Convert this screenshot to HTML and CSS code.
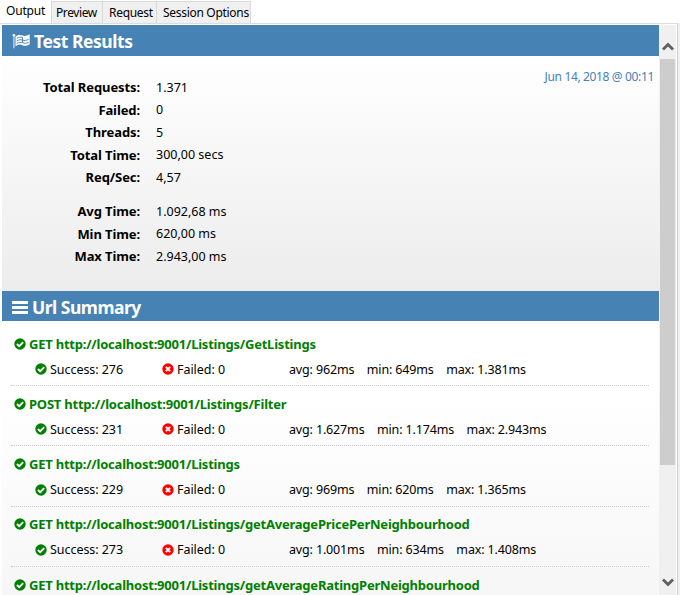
FILE: index.html
```html
<!DOCTYPE html>
<html lang="en">
<head>
<meta charset="utf-8">
<title>Test Results</title>
<link rel="stylesheet" href="styles.css">
</head>
<body>
<svg class="defs" aria-hidden="true">
  <symbol id="ok" viewBox="0 0 12 12"><circle cx="6" cy="6" r="5.7" fill="#008000"/><path d="M2.9 6 5.2 8.2 9.2 4.2" fill="none" stroke="#fff" stroke-width="1.8"/></symbol>
  <symbol id="bad" viewBox="0 0 12 12"><circle cx="6" cy="6" r="5.7" fill="#f00"/><path d="M3.9 3.9 8.1 8.1M8.1 3.9 3.9 8.1" fill="none" stroke="#fff" stroke-width="2"/></symbol>
</svg>
<div class="app">
  <nav class="tabs">
    <div class="tab active"><span class="t-output">Output</span></div>
    <div class="tab preview"><span>Preview</span></div>
    <div class="tab request"><span>Request</span></div>
    <div class="tab session"><span>Session Options</span></div>
  </nav>
  <div class="frame">
    <main class="content">
      <h2 class="bar">
        <svg class="flag" viewBox="0 0 20 16"><path d="M2 2.5V15.5" stroke="#fff" stroke-opacity=".75" stroke-width="1.3"/><circle cx="2" cy="1.9" r="1.4" fill="#fff"/><path d="M3.7 3.2C7 1.2 9 1.3 11.2 2.3 13.5 3.3 15.5 2.6 18.6 1V11.4C15.5 13.2 13.3 13.5 11 12.4 8.7 11.3 6.5 11.8 3.7 13.5Z" fill="#fff"/><path d="M5 5.2C7.3 4 9 3.6 11 4.3M5 10.6C7.3 9.4 9 9 11 9.7M11 4.3V7C13.3 7.9 15.2 7.4 17.5 6.2M11 9.7V7C9 6.3 7.3 6.7 5 7.9M11 9.7C13.3 10.8 15.2 10.5 17.5 9.3" fill="none" stroke="#4682b4" stroke-width="1"/></svg>
        <span class="h-test">Test Results</span>
      </h2>
      <section class="summary">
        <dl class="stats">
          <dt>Total Requests:</dt><dd>1.371</dd>
          <dt>Failed:</dt><dd>0</dd>
          <dt>Threads:</dt><dd>5</dd>
          <dt>Total Time:</dt><dd>300,00 secs</dd>
          <dt>Req/Sec:</dt><dd>4,57</dd>
        </dl>
        <dl class="stats times">
          <dt>Avg Time:</dt><dd>1.092,68 ms</dd>
          <dt>Min Time:</dt><dd>620,00 ms</dd>
          <dt>Max Time:</dt><dd>2.943,00 ms</dd>
        </dl>
        <time class="date">Jun 14, 2018 @ 00:11</time>
      </section>
      <h2 class="bar second">
        <svg class="menu" viewBox="0 0 16 14"><path d="M0 2.5H16M0 7.5H16M0 12.5H16" stroke="#fff" stroke-width="3"/></svg>
        <span class="h-url">Url Summary</span>
      </h2>
      <section class="urls">
        <article class="item">
          <h3><svg class="ic"><use href="#ok"/></svg><span>GET http://localhost:9001/Listings/GetListings</span></h3>
          <div class="row"><span class="success"><svg class="ic"><use href="#ok"/></svg>Success: 276</span><span class="failed"><svg class="ic"><use href="#bad"/></svg>Failed: 0</span><span class="m">avg: 962ms</span><span class="m">min: 649ms</span><span class="m">max: 1.381ms</span></div>
        </article>
        <article class="item">
          <h3><svg class="ic"><use href="#ok"/></svg><span>POST http://localhost:9001/Listings/Filter</span></h3>
          <div class="row"><span class="success"><svg class="ic"><use href="#ok"/></svg>Success: 231</span><span class="failed"><svg class="ic"><use href="#bad"/></svg>Failed: 0</span><span class="m">avg: 1.627ms</span><span class="m">min: 1.174ms</span><span class="m">max: 2.943ms</span></div>
        </article>
        <article class="item">
          <h3><svg class="ic"><use href="#ok"/></svg><span>GET http://localhost:9001/Listings</span></h3>
          <div class="row"><span class="success"><svg class="ic"><use href="#ok"/></svg>Success: 229</span><span class="failed"><svg class="ic"><use href="#bad"/></svg>Failed: 0</span><span class="m">avg: 969ms</span><span class="m">min: 620ms</span><span class="m">max: 1.365ms</span></div>
        </article>
        <article class="item">
          <h3><svg class="ic"><use href="#ok"/></svg><span>GET http://localhost:9001/Listings/getAveragePricePerNeighbourhood</span></h3>
          <div class="row"><span class="success"><svg class="ic"><use href="#ok"/></svg>Success: 273</span><span class="failed"><svg class="ic"><use href="#bad"/></svg>Failed: 0</span><span class="m">avg: 1.001ms</span><span class="m">min: 634ms</span><span class="m">max: 1.408ms</span></div>
        </article>
        <article class="item">
          <h3><svg class="ic"><use href="#ok"/></svg><span>GET http://localhost:9001/Listings/getAverageRatingPerNeighbourhood</span></h3>
        </article>
      </section>
    </main>
    <div class="scroll">
      <svg class="arrow" viewBox="0 0 12 9"><path d="M1 7.5 6 2.5 11 7.5" fill="none" stroke="#606060" stroke-width="2.8"/></svg>
      <div class="thumb"></div>
      <svg class="arrow down" viewBox="0 0 12 9"><path d="M1 1.5 6 6.5 11 1.5" fill="none" stroke="#606060" stroke-width="2.8"/></svg>
    </div>
  </div>
</div>
</body>
</html>
```
FILE: styles.css
```css
* { box-sizing: border-box; }
body {
  margin: 0;
  height: 595px;
  overflow: hidden;
  background: #fff;
  color: #000;
  font: 13px/18px "Segoe UI", "Noto Sans", "Open Sans", sans-serif;
}
.defs { position: absolute; width: 0; height: 0; }
.app { display: flex; flex-direction: column; height: 595px; }

.tabs { display: flex; height: 23px; padding-top: 1px; font-size: 12px; letter-spacing: -0.3px; }
.tab {
  height: 22px;
  padding: 2px 0 0 5px;
  border: 1px solid #d9d9d9;
  border-left: 0;
  border-bottom: 0;
  background: #f0f0f0;
  white-space: nowrap;
}
.tab.active { width: 52px; padding: 1px 0 0 6px; background: #fff; border-top: 0; letter-spacing: -0.2px; }
.preview { width: 51px; padding-left: 4px; letter-spacing: -0.4px; }
.request { width: 54px; padding-left: 6px; }
.session { width: 94px; padding-left: 6px; }

.frame {
  display: flex;
  width: 678px;
  height: 572px;
  padding: 1px 1px 0 2px;
  border-top: 1px solid #dcdcdc;
  border-right: 1px solid #d0d0d0;
  box-shadow: 2px 0 0 #f0f0f0;
}
.content { width: 657px; height: 570px; overflow: hidden; }

.bar {
  display: flex;
  align-items: center;
  gap: 3px;
  height: 31px;
  margin: 0;
  padding: 1px 0 0 10px;
  background: #4682b4;
  color: #fff;
  font-size: 17.5px;
  line-height: 26px;
  font-weight: 700;
  letter-spacing: -0.45px;
  white-space: nowrap;
}
.bar.second { height: 30px; gap: 4px; letter-spacing: -0.5px; }
.flag { width: 19px; height: 16px; }
.menu { width: 16px; height: 14px; }

.summary {
  position: relative;
  height: 235px;
  padding-top: 20px;
  background: linear-gradient(#fff, #ececec);
}
.stats {
  display: grid;
  grid-template-columns: 138px auto;
  column-gap: 16px;
  grid-auto-rows: 22.5px;
  align-items: center;
  margin: 0;
}
.times { margin-top: 11.5px; }
.stats dt { text-align: right; font-weight: 700; letter-spacing: -0.1px; }
.stats dd { margin: 0; padding-top: 1px; font-size: 12.5px; letter-spacing: 0; }
.date { position: absolute; top: 12px; right: 5px; color: #4682b4; font-size: 12px; letter-spacing: -0.35px; }

.urls { height: 460px; padding: 5px 10px 0 9px; background: linear-gradient(#fff 15%, #efefef); }
.item { height: 60.2px; padding: 8.8px 0 0 3px; border-bottom: 1px dotted #ccc; white-space: nowrap; }
.item h3 {
  display: flex;
  align-items: center;
  gap: 3px;
  height: 18px;
  margin: 0;
  color: #008000;
  font-size: 13px;
  letter-spacing: -0.22px;
}
.ic { flex: none; width: 12px; height: 12px; }
.row { display: flex; height: 18px; margin: 8px 0 0 21px; font-size: 12.5px; letter-spacing: -0.05px; }
.row .ic { position: relative; top: -0.5px; }
.row span { display: flex; align-items: center; gap: 3px; }
.success { width: 127px; }
.failed { width: 127px; }
.m { margin-right: 12.5px; letter-spacing: -0.15px; }

.scroll {
  display: flex;
  flex-direction: column;
  align-items: center;
  width: 17px;
  height: 570px;
  background: #f0f0f0;
}
.arrow { flex: none; width: 12px; height: 9px; margin-top: 17px; }
.thumb { width: 15px; height: 406px; margin-top: 8px; background: #cdcdcd; }
.down { margin-top: 113px; }
```
